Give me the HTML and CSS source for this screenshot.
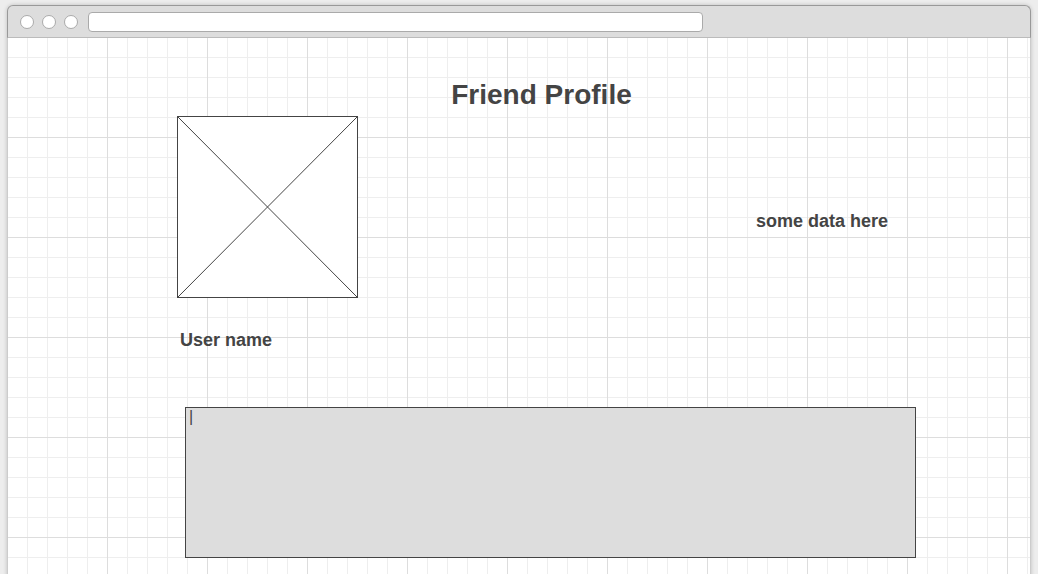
FILE: index.html
```html
<!DOCTYPE html>
<html lang="en">
<head>
<meta charset="utf-8">
<meta name="viewport" content="width=device-width, initial-scale=1">
<title>Friend Profile</title>
<link rel="stylesheet" href="styles.css">
</head>
<body>
<div class="browser">
  <header class="toolbar">
    <span class="dot"></span>
    <span class="dot"></span>
    <span class="dot"></span>
    <input class="address" type="text" aria-label="Address">
  </header>
  <main class="canvas">
    <h1 class="title">Friend Profile</h1>
    <div class="profile">
      <svg class="photo" viewBox="0 0 181 182" role="img" aria-label="Profile photo">
        <rect x="0.5" y="0.5" width="180" height="181" fill="#fff" stroke="#444"/>
        <path d="M0.5 0.5L180.5 181.5M180.5 0.5L0.5 181.5" stroke="#444"/>
      </svg>
      <p class="label data">some data here</p>
    </div>
    <h2 class="label name">User name</h2>
    <textarea class="message" aria-label="Message">|</textarea>
  </main>
</div>
</body>
</html>
```
FILE: styles.css
```css
* {
  box-sizing: border-box;
}

body {
  margin: 0;
  padding: 5px 7px 0;
  background: #ededed;
  color: #444;
  font-family: "Liberation Sans", Arial, sans-serif;
  overflow: hidden;
}

.browser {
  min-height: 100vh;
  display: flex;
  flex-direction: column;
  border-radius: 6px 6px 0 0;
  box-shadow: 0 0 4px rgba(0, 0, 0, 0.2);
}

.toolbar {
  display: flex;
  align-items: center;
  gap: 8px;
  height: 33px;
  padding: 0 12px;
  background: #ddd;
  border: 1px solid #999;
  border-bottom-color: #bbb;
  border-radius: 6px 6px 0 0;
}

.dot {
  width: 14px;
  height: 14px;
  background: #fff;
  border: 1px solid #aaa;
  border-radius: 50%;
}

.address {
  width: 615px;
  height: 20px;
  margin: 0 0 0 2px;
  padding: 0 6px;
  background: #fff;
  border: 1px solid #aaa;
  border-radius: 4px;
  color: inherit;
  font: 12px "Liberation Sans", Arial, sans-serif;
}

.canvas {
  flex: 1;
  padding: 41px 114px 16px 169px;
  border: solid #ccc;
  border-width: 0 1px;
  background-color: #fff;
  background-image:
    linear-gradient(to right, transparent 99px, #ddd 99px),
    linear-gradient(to bottom, transparent 99px, #ddd 99px),
    linear-gradient(to right, transparent 19px, #eee 19px),
    linear-gradient(to bottom, transparent 19px, #eee 19px);
  background-size: 100px 100px, 100px 100px, 20px 20px, 20px 20px;
}

.title {
  margin: 0 10px 5px 0;
  font-size: 28px;
  line-height: 32px;
  text-align: center;
}

.profile {
  display: flex;
  align-items: center;
  justify-content: space-between;
}

.photo {
  display: block;
  width: 181px;
  height: 182px;
}

.label {
  margin: 0;
  font-size: 18px;
  font-weight: bold;
  line-height: 24px;
}

.data {
  margin: 0 28px 0 0;
  padding-top: 28px;
}

.name {
  padding: 30px 0 55px 3px;
}

.message {
  display: block;
  width: calc(100% - 8px);
  height: 151px;
  margin: 0 0 0 8px;
  padding: 0 3px;
  background: #ddd;
  border: 1px solid #444;
  border-radius: 0;
  color: #444;
  font: 16px/18px "Liberation Sans", Arial, sans-serif;
  resize: none;
  overflow: hidden;
}
```
